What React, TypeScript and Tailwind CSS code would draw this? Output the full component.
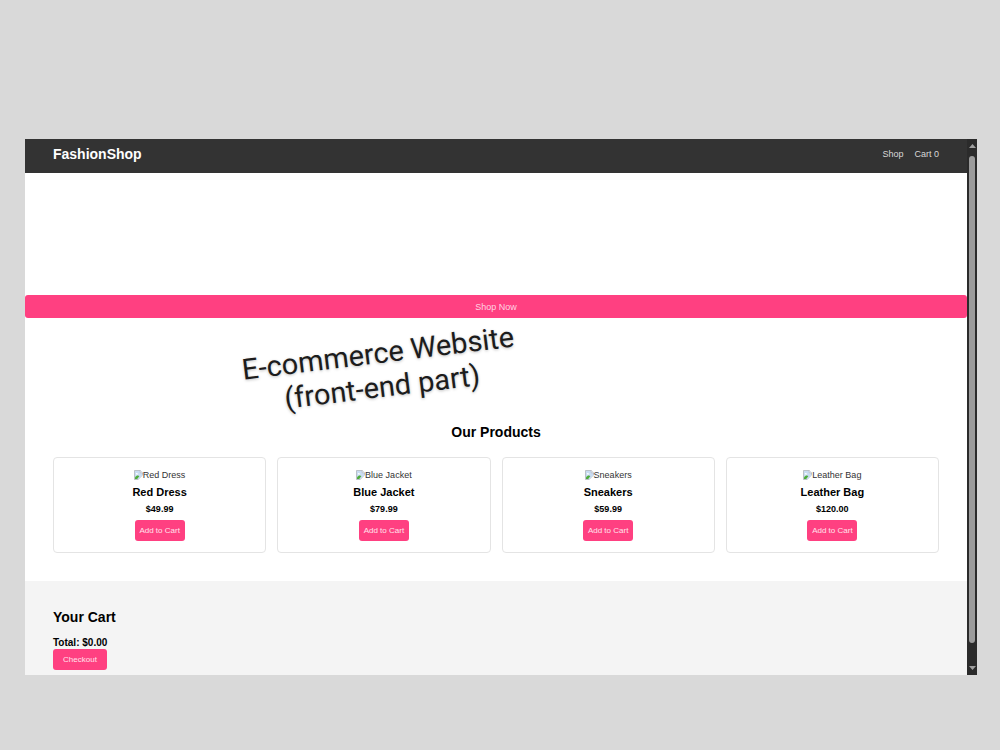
import React from 'react'

const products = [
  { name: 'Red Dress', price: '$49.99' },
  { name: 'Blue Jacket', price: '$79.99' },
  { name: 'Sneakers', price: '$59.99' },
  { name: 'Leather Bag', price: '$120.00' },
];

const BrokenImage = () => (
  <svg className="w-[9px] h-[10px] shrink-0" viewBox="0 0 9 10" aria-hidden="true">
    <path d="M.5.5h5.7l2.3 2.3v6.7h-8z" fill="#c9dcf3" stroke="#a9adb3" strokeWidth=".7" />
    <path d="M6.2.5v2.3h2.3" fill="#fff" stroke="#a9adb3" strokeWidth=".6" />
    <path d="M1.8 3.8c0-1 1.5-1.2 1.8-.3.9 0 1 1 .2 1H2.2z" fill="#fff" />
    <path d="M1 9V7.2C2.6 5.2 4 5.2 5.4 6L3.2 9z" fill="#4ead3b" />
    <path d="M9 4.6 3.9 10H9z" fill="#fff" />
    <path d="M8.5 5.3 4.3 9.5" stroke="#b9c4cf" strokeWidth=".6" />
  </svg>
);

const Scrollbar = () => (
  <div className="bg-[#2b2b2b] w-[10px] shrink-0 flex flex-col items-center py-[5px]" aria-hidden="true">
    <svg className="w-[7px] h-1" viewBox="0 0 7 4">
      <path d="M3.5 0 7 4H0z" fill="#a0a0a0" />
    </svg>
    <div className="bg-[#9b9b9b] rounded-full w-[6px] flex-1 mt-2 mb-[23px]" />
    <svg className="w-[7px] h-1" viewBox="0 0 7 4">
      <path d="M0 0h7L3.5 4z" fill="#a0a0a0" />
    </svg>
  </div>
);

const App = () => {
  return (
    <div className="bg-[#d9d9d9] min-h-screen pt-[139px] pb-[75px] pl-[25px] pr-[23px] font-['Liberation_Sans',Arial,sans-serif] text-[9px] leading-3 text-black">
      <div className="flex">
        <div className="flex-1 bg-white">
          <header className="bg-[#333] h-[34px] px-7 pb-[5px] flex items-center justify-between">
            <h1 className="text-white text-[14px] leading-4 font-bold">FashionShop</h1>
            <nav className="flex gap-[11px] text-[#d8d8d8]">
              <a href="#products">Shop</a>
              <a href="#cart">Cart 0</a>
            </nav>
          </header>

          <section className="relative pt-[122px] pb-[106px]">
            <button className="block w-full bg-[#ff4081] text-[#ffd3e1] rounded-[3px] h-[23px]">
              Shop Now
            </button>
            <p className="absolute left-[23%] top-[163px] w-[276px] text-center font-['Roboto',sans-serif] text-[29px] leading-[34px] text-[#1c1c1c] whitespace-nowrap -rotate-7 text-shadow-[0_1px_3px_rgba(0,0,0,0.25)]">
              E-commerce Website
              <br />
              (front-end part)
            </p>
          </section>

          <section id="products" className="px-7 pb-7">
            <h2 className="text-[14px] leading-4 font-bold text-center">Our Products</h2>
            <div className="grid grid-cols-4 gap-[11px] mt-[17px]">
              {products.map((product) => (
                <div key={product.name} className="border border-[#e4e4e4] rounded-[4px] py-[11px] flex flex-col items-center gap-[5px]">
                  <div className="flex items-center text-[#333]">
                    <BrokenImage />
                    <span>{product.name}</span>
                  </div>
                  <h3 className="text-[11px] leading-3 font-bold">{product.name}</h3>
                  <p className="font-bold">{product.price}</p>
                  <button className="bg-[#ff4081] text-[#ffe3ec] text-[8px] rounded-[3px] w-[50px] h-[21px]">
                    Add to Cart
                  </button>
                </div>
              ))}
            </div>
          </section>

          <section id="cart" className="bg-[#f4f4f4] px-7 pt-7 pb-[5px]">
            <h2 className="text-[14px] leading-4 font-bold">Your Cart</h2>
            <p className="text-[10px] leading-[13px] font-bold mt-[11px]">Total: $0.00</p>
            <button className="block bg-[#ff4081] text-[#ffe3ec] text-[8px] rounded-[3px] w-[54px] h-[21px]">
              Checkout
            </button>
          </section>
        </div>
        <Scrollbar />
      </div>
    </div>
  );
};

export default App;
